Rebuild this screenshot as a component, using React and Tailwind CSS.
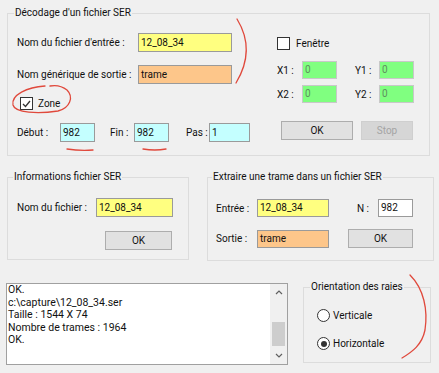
import React from "react";

const Legend = ({ children, ml }) => (
  <span className={`block w-fit bg-[#f0f0f0] -mt-[8px] h-[14px] leading-[14px] px-[1px] whitespace-nowrap ${ml}`}>{children}</span>
);

const Field = ({ value, className }) => (
  <div className={`border border-[#9a9a9a] px-[2px] flex items-center leading-none ${className}`}>{value}</div>
);

const Button = ({ children, className, disabled }) => (
  <div
    className={`flex items-center justify-center border ${
      disabled ? "bg-[#d6d6d6] border-[#cfcfcf] text-[#a4a4a4]" : "bg-[#e1e1e1] border-[#adadad]"
    } ${className}`}
  >
    {children}
  </div>
);

const CheckBox = ({ checked }) => (
  <div className="w-[13px] h-[13px] border border-[#333] bg-white flex items-center justify-center shrink-0">
    {checked && (
      <svg width="9" height="8" viewBox="0 0 9 8">
        <path d="M1 4 L3.5 6.5 L8 1" fill="none" stroke="#333" strokeWidth="1.3" />
      </svg>
    )}
  </div>
);

const Radio = ({ checked }) => (
  <div className="w-[13px] h-[13px] rounded-full border border-[#333] bg-white flex items-center justify-center shrink-0">
    {checked && <div className="w-[6px] h-[6px] rounded-full bg-[#333]" />}
  </div>
);

const Chevron = ({ up }) => (
  <svg width="8" height="5" viewBox="0 0 8 5">
    <path d={up ? "M1 4 L4 1 L7 4" : "M1 1 L4 4 L7 1"} fill="none" stroke="#606060" strokeWidth="1.2" />
  </svg>
);

export default function App() {
  const logLines = ["OK.", "c:\\capture\\12_08_34.ser", "Taille : 1544 X 74", "Nombre de trames : 1964", "OK."];

  return (
    <div className="relative w-[439px] h-[373px] overflow-hidden bg-[#f0f0f0] text-[#111] text-[10px] whitespace-nowrap font-[Roboto,'Liberation_Sans',sans-serif]">
      {/* Décodage */}
      <div className="ml-[7px] mt-[13px] w-[423px] h-[143px] border border-[#dcdcdc]">
        <Legend ml="ml-[6px]">Décodage d'un fichier SER</Legend>
        <div className="flex pl-[9px]">
          {/* left column */}
          <div className="flex flex-col w-[233px]">
            <div className="mt-[13px] h-[19px] flex items-center">
              <span className="w-[121px]">Nom du fichier d'entrée :</span>
              <Field value="12_08_34" className="w-[94px] h-[19px] bg-[#ffff80]" />
            </div>
            <div className="mt-[13px] h-[19px] flex items-center">
              <span className="w-[121px]">Nom générique de sortie :</span>
              <Field value="trame" className="w-[94px] h-[19px] bg-[#fdc68a]" />
            </div>
            <div className="mt-[13px] h-[13px] flex items-center pl-[3px]">
              <CheckBox checked />
              <span className="ml-[5px]">Zone</span>
            </div>
            <div className="mt-[13px] h-[19px] flex items-center">
              <span className="w-[43px]">Début :</span>
              <Field value="982" className="w-[35px] h-[19px] bg-[#c4ffff]" />
              <span className="ml-[15px] w-[24px]">Fin :</span>
              <Field value="982" className="w-[35px] h-[19px] bg-[#c4ffff]" />
              <span className="ml-[17px] w-[23px]">Pas :</span>
              <Field value="1" className="w-[41px] h-[19px] bg-[#c4ffff]" />
            </div>
          </div>
          {/* right column */}
          <div className="flex flex-col ml-[27px]">
            <div className="mt-[17px] h-[13px] flex items-center">
              <CheckBox />
              <span className="ml-[6px]">Fenêtre</span>
            </div>
            <div className="mt-[11px] h-[18px] flex items-center">
              <span className="w-[25px]">X1 :</span>
              <Field value="0" className="w-[35px] h-[18px] bg-[#80ff80] border-[#c8c8c8] text-[#5f8f5f]" />
              <span className="ml-[18px] w-[24px]">Y1 :</span>
              <Field value="0" className="w-[35px] h-[18px] bg-[#80ff80] border-[#c8c8c8] text-[#5f8f5f]" />
            </div>
            <div className="mt-[6px] h-[18px] flex items-center">
              <span className="w-[25px]">X2 :</span>
              <Field value="0" className="w-[35px] h-[18px] bg-[#80ff80] border-[#c8c8c8] text-[#5f8f5f]" />
              <span className="ml-[18px] w-[24px]">Y2 :</span>
              <Field value="0" className="w-[35px] h-[18px] bg-[#80ff80] border-[#c8c8c8] text-[#5f8f5f]" />
            </div>
            <div className="mt-[18px] flex">
              <Button className="ml-[4px] w-[72px] h-[19px]">OK</Button>
              <Button disabled className="ml-[8px] w-[52px] h-[19px]">Stop</Button>
            </div>
          </div>
        </div>
      </div>

      {/* Middle groups */}
      <div className="flex mt-[21px]">
        <div className="ml-[7px] w-[182px] h-[83px] border border-[#dcdcdc]">
          <Legend ml="ml-[5px]">Informations fichier SER</Legend>
          <div className="pl-[9px]">
            <div className="mt-[14px] h-[19px] flex items-center">
              <span className="w-[79px]">Nom du fichier :</span>
              <Field value="12_08_34" className="w-[77px] h-[19px] bg-[#ffff80]" />
            </div>
            <Button className="mt-[14px] ml-[88px] w-[67px] h-[19px]">OK</Button>
          </div>
        </div>
        <div className="ml-[18px] w-[227px] h-[84px] border border-[#dcdcdc]">
          <Legend ml="ml-[4px]">Extraire une trame dans un fichier SER</Legend>
          <div className="pl-[8px]">
            <div className="mt-[15px] h-[18px] flex items-center">
              <span className="w-[41px]">Entrée :</span>
              <Field value="12_08_34" className="w-[72px] h-[18px] bg-[#ffff80]" />
              <span className="ml-[28px] w-[21px]">N :</span>
              <Field value="982" className="w-[35px] h-[18px] bg-white" />
            </div>
            <div className="mt-[12px] h-[19px] flex items-center">
              <span className="w-[41px]">Sortie :</span>
              <Field value="trame" className="w-[72px] h-[18px] bg-[#fdc68a]" />
              <Button className="ml-[19px] w-[65px] h-[19px]">OK</Button>
            </div>
          </div>
        </div>
      </div>

      {/* Bottom */}
      <div className="flex items-start mt-[22px]">
        <div className="ml-[6px] w-[282px] h-[82px] border border-[#a0a0a0] bg-white flex">
          <div className="flex-1 pl-[1px] text-[10.5px] leading-[12.5px]">
            {logLines.map((l, i) => (
              <div key={i}>{l}</div>
            ))}
          </div>
          <div className="w-[17px] bg-[#f0f0f0] flex flex-col">
            <div className="h-[17px] flex items-center justify-center">
              <Chevron up />
            </div>
            <div className="flex-1 flex justify-center">
              <div className="mt-[21px] w-[13px] h-[24px] bg-[#cdcdcd]" />
            </div>
            <div className="h-[17px] flex items-center justify-center">
              <Chevron />
            </div>
          </div>
        </div>
        <div className="ml-[15px] mt-[4px] w-[128px] h-[76px] border border-[#dcdcdc]">
          <Legend ml="ml-[6px]">Orientation des raies</Legend>
          <div className="pl-[13px]">
            <div className="mt-[15px] h-[13px] flex items-center">
              <Radio />
              <span className="ml-[3px]">Verticale</span>
            </div>
            <div className="mt-[15px] h-[13px] flex items-center">
              <Radio checked />
              <span className="ml-[3px]">Horizontale</span>
            </div>
          </div>
        </div>
      </div>

      {/* hand-drawn red annotations */}
      <svg className="absolute inset-0 pointer-events-none" width="439" height="373" viewBox="0 0 439 373">
        <g fill="none" stroke="#e0493c" strokeWidth="1.3" strokeLinecap="round">
          <path d="M237 19 Q256 50 236 83" />
          <path d="M45 86 C27 87 11 95 13 105 C15 113 38 114 58 111 C70 108 74 97 67 90 C62 86 55 85 50 86" />
          <path d="M67 149 Q80 151 93 150" />
          <path d="M143 149 Q155 151 166 149" />
          <path d="M410 275 C424 289 428 310 425 330 C422 345 412 352 402 358" />
        </g>
      </svg>
    </div>
  );
}
